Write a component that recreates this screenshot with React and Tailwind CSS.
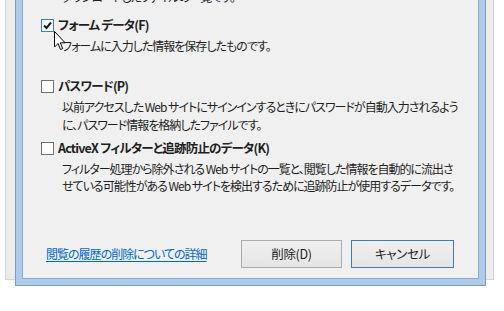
import React from 'react';

const font = { fontFamily: '"Noto Sans CJK JP", "Noto Sans", sans-serif' };

function Box({ checked, hover }) {
  return (
    <span
      className={`flex h-[13px] w-[13px] shrink-0 items-center justify-center border ${
        hover ? 'border-[#3c7fb1] bg-[#f4f9fd]' : 'border-[#707070] bg-white'
      }`}
    >
      {checked && (
        <svg width="9" height="9" viewBox="0 0 9 9">
          <path d="M1 4.5 L3.5 7 L8 1.5" fill="none" stroke="#1c1c1c" strokeWidth="2" />
        </svg>
      )}
    </span>
  );
}

function Option({ label, checked, hover, lines, top, leading }) {
  return (
    <div className={top}>
      <div className="flex h-[18px] items-center gap-[4px]">
        <Box checked={checked} hover={hover} />
        <span className="text-[12.5px] font-bold leading-[18px] tracking-[-0.8px] text-[#1e1e1e]">
          {label}
        </span>
      </div>
      <div className={`mt-[3px] pl-[21px] ${leading}`}>
        {lines.map((l) => (
          <div key={l} className="whitespace-nowrap">
            {l}
          </div>
        ))}
      </div>
    </div>
  );
}

export default function App() {
  return (
    <div className="relative h-[311px] w-[504px] overflow-hidden bg-white" style={font}>
      <div className="ml-[5px] h-[280px] w-[489px] border-x border-b border-[#d4d4d4] bg-[#ececec] pl-[9px]">
        <div className="flex h-[286px] w-[471px] flex-col border-x border-b border-[#7d9cc0] bg-[#aecbeb] px-[6px] pb-[6px]">
          <div className="flex flex-1 flex-col border-x border-b border-[#8fa9c8] bg-[#f0f0f0] pl-[18px] text-[12px] tracking-[-1px] text-[#1e1e1e] [font-feature-settings:'palt']">
            <div className="mt-[-12px] whitespace-nowrap pl-[21px] leading-[18px]">
              ダウンロードしたファイルの一覧です。
            </div>

            <Option
              top="mt-[10px]"
              leading="leading-[18px]"
              label="フォーム データ(F)"
              checked
              hover
              lines={['フォームに入力した情報を保存したものです。']}
            />

            <Option
              top="mt-[22px]"
              leading="leading-[18px]"
              label="パスワード(P)"
              lines={[
                '以前アクセスした Web サイトにサインインするときにパスワードが自動入力されるよう',
                'に、パスワード情報を格納したファイルです。',
              ]}
            />

            <Option
              top="mt-[5px]"
              leading="leading-[17px]"
              label="ActiveX フィルターと追跡防止のデータ(K)"
              lines={[
                'フィルター処理から除外される Web サイトの一覧と、閲覧した情報を自動的に流出さ',
                'せている可能性がある Web サイトを検出するために追跡防止が使用するデータです。',
              ]}
            />

            <div className="mt-auto flex items-center pb-[10px] pr-[24px]">
              <a className="ml-[5px] text-[12px] text-[#0066cc] underline underline-offset-2">
                閲覧の履歴の削除についての詳細
              </a>
              <button className="ml-auto h-[28px] w-[101px] border border-[#acacac] bg-gradient-to-b from-[#f0f0f0] to-[#e5e5e5] text-[12.5px] tracking-[-0.3px] text-[#1e1e1e]">
                削除(D)
              </button>
              <button className="ml-[9px] h-[28px] w-[103px] border border-[#3c7fb1] bg-gradient-to-b from-[#f0f0f0] to-[#e5e5e5] text-[12.5px] tracking-[-0.3px] text-[#1e1e1e]">
                キャンセル
              </button>
            </div>
          </div>
        </div>
      </div>

      <svg className="absolute left-[54px] top-[31px]" width="13" height="20" viewBox="0 0 13 20">
        <path
          d="M0.5 0.5 L0.5 16 L4 12.5 L6.5 18.5 L8.7 17.6 L6.3 11.8 L11.2 11.8 Z"
          fill="white"
          stroke="black"
          strokeWidth="1"
        />
      </svg>
    </div>
  );
}
